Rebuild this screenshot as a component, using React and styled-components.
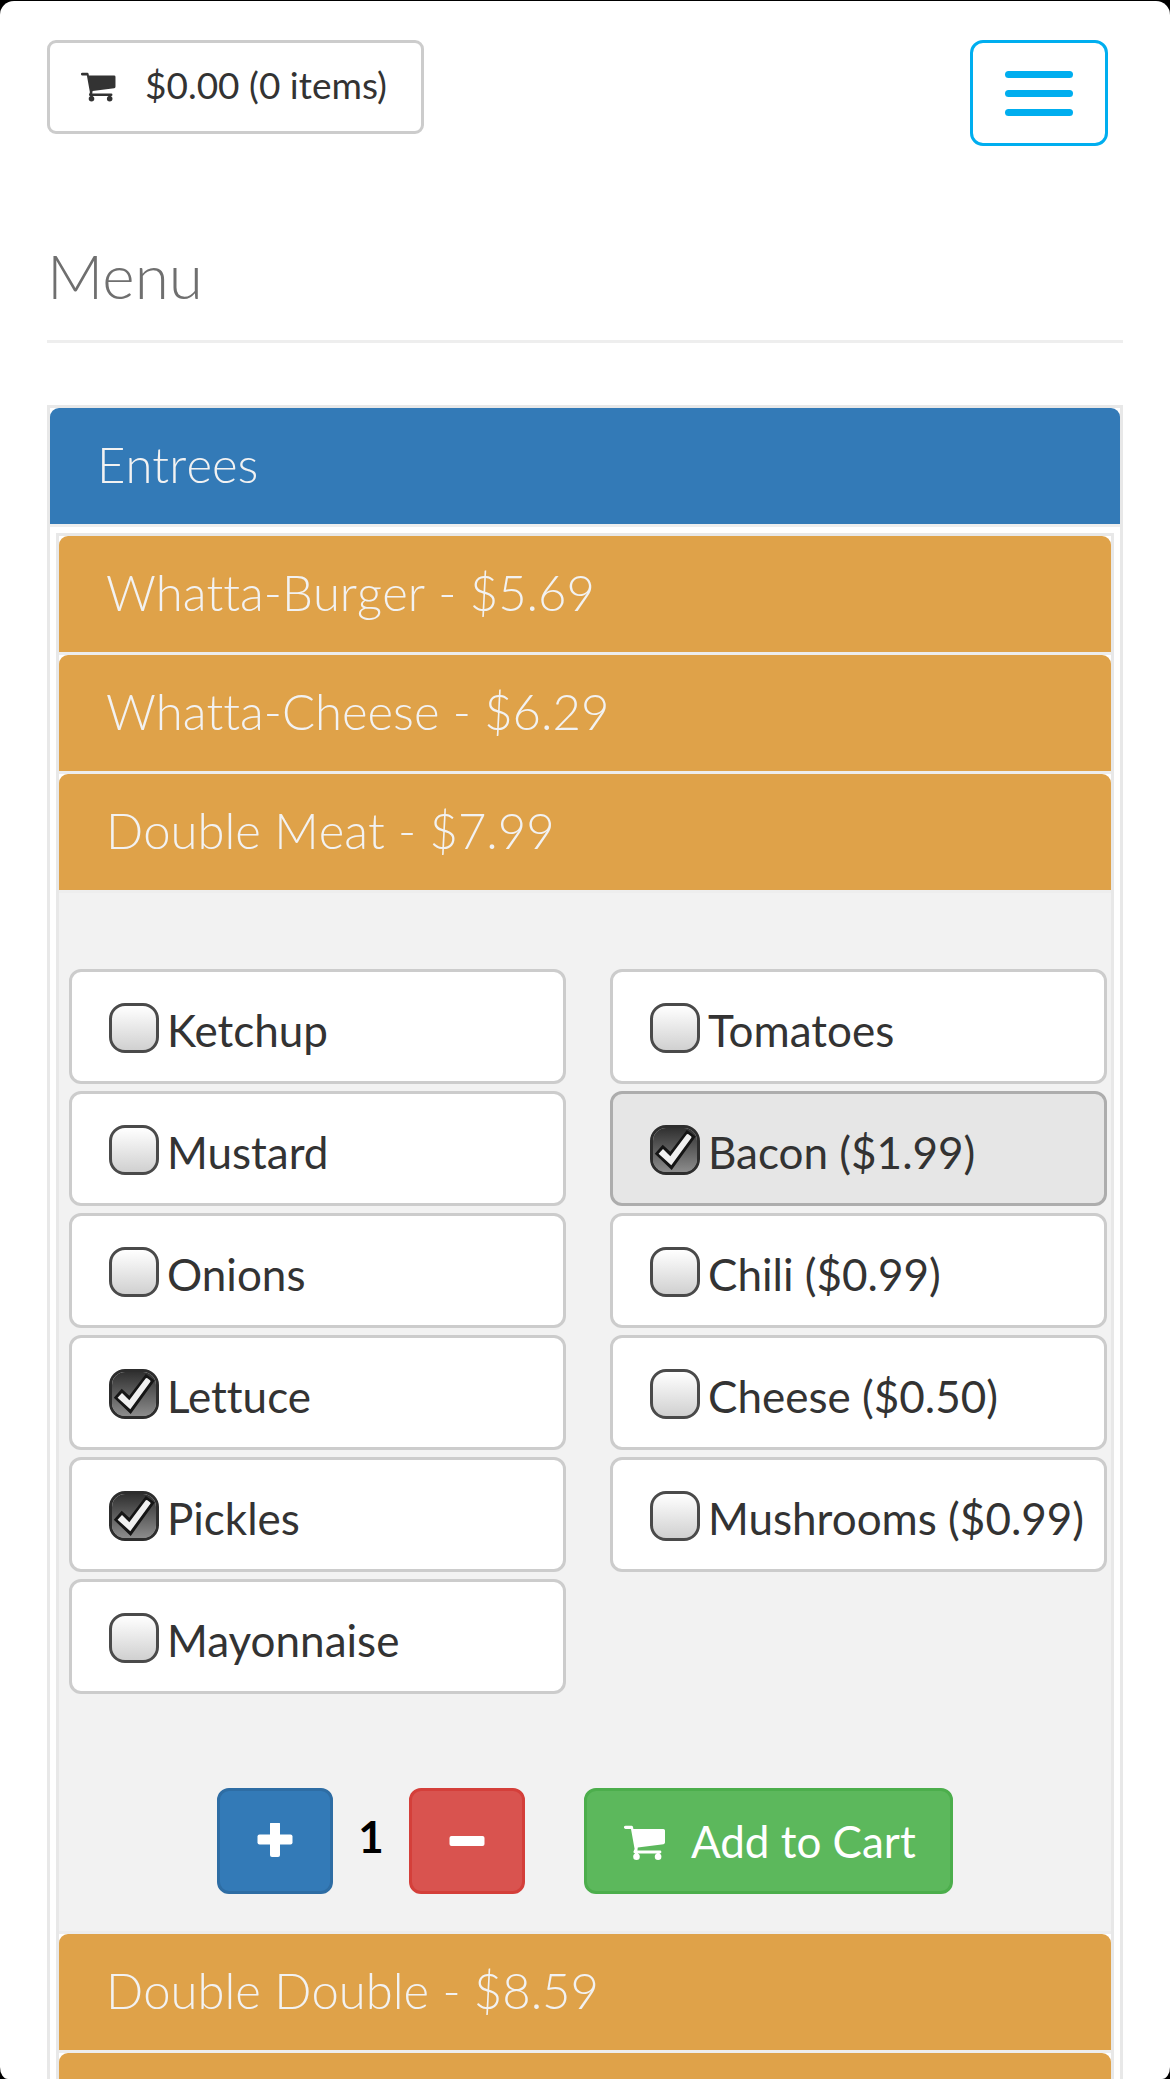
import React, { useState } from "react";
import styled, { createGlobalStyle } from "styled-components";

const GlobalStyle = createGlobalStyle`
  *, *::before, *::after { box-sizing: border-box; }
  html, body { margin: 0; background: #000; }
  body {
    font-family: Lato, "Open Sans", sans-serif;
    font-variant-ligatures: none;
    color: #333;
  }
  button { font-family: inherit; font-variant-ligatures: inherit; cursor: pointer; margin: 0; }
`;

const Screen = styled.div`
  height: calc(100vh - 1px);
  margin-top: 1px;
  padding: 39px 47px 0;
  background: #fff;
  border-radius: 14px 14px 8px 8px / 14px 14px 12px 12px;
  overflow-y: auto;
  scrollbar-width: none;
`;

const Header = styled.header`
  display: flex;
  justify-content: space-between;
  align-items: flex-start;
  padding-right: 15px;
`;

const CartButton = styled.button`
  display: flex;
  align-items: center;
  gap: 27px;
  padding: 20px 34px 24px 31px;
  border: 3px solid #ccc;
  border-radius: 9px;
  background: #fff;
  color: #333;
  font-size: 37px;
  line-height: 44px;
`;

const MenuToggle = styled.button`
  display: grid;
  gap: 12px;
  align-content: center;
  justify-content: center;
  width: 138px;
  height: 106px;
  padding: 0;
  border: 3px solid #00aeef;
  border-radius: 13px;
  background: #fff;
`;

const ToggleBar = styled.span`
  width: 68px;
  height: 7px;
  border-radius: 4px;
  background: #00aeef;
`;

const PageTitle = styled.h1`
  margin: 95px 0 62px;
  padding-bottom: 31px;
  border-bottom: 3px solid #eee;
  color: #6f6f6f;
  font-size: 62px;
  font-weight: 300;
  line-height: 68px;
`;

const Panel = styled.section`
  border: 3px solid #e8e8e8;
  background: #fff;
`;

const PanelTitle = styled.h2`
  margin: 0;
  border-bottom: ${(p) => (p.$ruled ? "3px solid #eee" : "0")};
`;

const PanelToggle = styled.button`
  display: block;
  width: 100%;
  min-height: 116px;
  padding: 26px 47px 30px;
  border: 0;
  border-radius: 9px 9px 0 0;
  background: ${(p) => (p.$tone === "primary" ? "#337ab7" : "#dfa249")};
  color: #f2f2f2;
  font-size: 49px;
  font-weight: 300;
  font-kerning: none;
  line-height: 60px;
  text-align: left;
`;

const PanelContent = styled.div`
  padding: 6px;
`;

const ItemList = styled.div`
  border: 3px solid #e8e8e8;
`;

const Item = styled.article`
  border-bottom: 3px solid #ededed;
`;

const ItemBody = styled.div`
  padding: 76px 4px 37px 10px;
  border-top: 3px solid #eee;
  background: #f2f2f2;
`;

const Toppings = styled.div`
  display: grid;
  grid-template-columns: 1fr 1fr;
  gap: 44px;
`;

const ToppingColumn = styled.div`
  display: flex;
  flex-direction: column;
  gap: 7px;
`;

const ToppingLabel = styled.label`
  display: flex;
  align-items: flex-start;
  gap: 8px;
  padding: 28px 0 21px 37px;
  border: 3px solid ${(p) => (p.$active ? "#adadad" : "#ccc")};
  border-radius: 12px;
  background: ${(p) => (p.$active ? "#e6e6e6" : "#fff")};
  font-size: 44px;
  line-height: 60px;
  white-space: nowrap;
  cursor: pointer;
`;

const Box = styled.span`
  display: grid;
  flex: none;
  margin-top: 3px;

  > * {
    grid-area: 1 / 1;
  }
`;

const BoxInput = styled.input`
  appearance: none;
  width: 50px;
  height: 50px;
  margin: 0;
  border: 3px solid #4a4a4a;
  border-radius: 16px;
  background: linear-gradient(#fff, #d0d0d0) padding-box;

  &:checked {
    border-color: #2d2d2d;
    background: linear-gradient(#303030, #8c8c8c) padding-box;
  }
`;

const BoxTick = styled.svg`
  width: 50px;
  height: 50px;
  pointer-events: none;
`;

const Actions = styled.div`
  display: flex;
  justify-content: center;
  align-items: flex-start;
  margin: 94px 6px 0 0;
`;

const tones = {
  primary: ["#337ab7", "#2e6da4"],
  danger: ["#d9534f", "#d43f3a"],
  success: ["#5cb85c", "#4cae4c"],
};

const ActionButton = styled.button`
  display: flex;
  align-items: center;
  justify-content: center;
  gap: 23px;
  height: 106px;
  padding: 0 ${(p) => (p.$tone === "success" ? 34 : 37)}px 0 37px;
  border: 3px solid ${(p) => tones[p.$tone][1]};
  border-radius: 12px;
  background: ${(p) => tones[p.$tone][0]};
  color: #fff;
  font-size: 44px;
  line-height: 60px;
`;

const Stepper = styled.div`
  display: flex;
  align-items: flex-start;
  gap: 25px;
  margin-right: 59px;
`;

const Quantity = styled.output`
  color: #000;
  font-size: 44px;
  font-weight: 700;
  line-height: 96px;
`;

const StepIcon = styled.svg`
  width: 36px;
  height: 36px;
`;

function CartIcon({ size }) {
  return (
    <svg width={size} height={size} viewBox="0 0 44 44" fill="currentColor" aria-hidden="true">
      <path d="M1.6 6.7H7.6Q8.7 6.7 9 8L9.4 10H39.4Q41 10 41 11.6V23.6Q41 25 39.5 25.2L13.8 28.4L13.4 31.6H36a1.4 1.4 0 0 1 0 2.8H11Q9.3 34.4 9.5 32.6L10.6 30L7 10H1.6a1.65 1.65 0 0 1 0-3.3Z" />
      <path d="M11 33.5h3v3h-3zM32.6 33.5h3v3h-3z" />
      <circle cx="12.5" cy="37.7" r="3.3" />
      <circle cx="34.1" cy="37.7" r="3.3" />
    </svg>
  );
}

const leftToppings = ["Ketchup", "Mustard", "Onions", "Lettuce", "Pickles", "Mayonnaise"];
const rightToppings = [
  "Tomatoes",
  "Bacon ($1.99)",
  "Chili ($0.99)",
  "Cheese ($0.50)",
  "Mushrooms ($0.99)",
];

function Topping({ name, checked, active, onToggle }) {
  const id = "topping-" + name.split(" ")[0].toLowerCase();
  return (
    <ToppingLabel htmlFor={id} $active={active}>
      <Box>
        <BoxInput id={id} type="checkbox" checked={checked} onChange={() => onToggle(name)} />
        {checked && (
          <BoxTick viewBox="0 0 50 50" aria-hidden="true">
            <path d="M4.8 28.7L12.7 19.7L20.3 26.7L36.8 5L45.8 11.4L21.7 45Z" fill="#151515" />
            <path
              d="M8.6 28.7L13 24L20.3 31.2L36.6 9.6Q37.4 8.7 38.4 9.3L41 11.2Q42 12 41.2 13L21.3 40.2Z"
              fill="#f0f0f0"
            />
          </BoxTick>
        )}
      </Box>
      {name}
    </ToppingLabel>
  );
}

function MenuItem({ title, label, children }) {
  return (
    <Item>
      <PanelTitle as="h3">
        <PanelToggle type="button" aria-label={label} aria-expanded={Boolean(children)}>
          {title}
        </PanelToggle>
      </PanelTitle>
      {children && <ItemBody>{children}</ItemBody>}
    </Item>
  );
}

export default function App() {
  const [selected, setSelected] = useState(["Lettuce", "Pickles", "Bacon ($1.99)"]);
  const [lastTouched, setLastTouched] = useState("Bacon ($1.99)");
  const [quantity, setQuantity] = useState(1);

  const toggle = (name) => {
    setLastTouched(name);
    setSelected((list) =>
      list.includes(name) ? list.filter((n) => n !== name) : [...list, name]
    );
  };

  const renderColumn = (names) => (
    <ToppingColumn>
      {names.map((name) => (
        <Topping
          key={name}
          name={name}
          checked={selected.includes(name)}
          active={lastTouched === name}
          onToggle={toggle}
        />
      ))}
    </ToppingColumn>
  );

  return (
    <>
      <GlobalStyle />
      <Screen>
        <Header>
          <CartButton type="button">
            <CartIcon size={37} />
            $0.00 (0 items)
          </CartButton>
          <MenuToggle type="button" aria-label="Toggle navigation">
            <ToggleBar />
            <ToggleBar />
            <ToggleBar />
          </MenuToggle>
        </Header>
        <main>
          <PageTitle>Menu</PageTitle>
          <Panel>
            <PanelTitle $ruled>
              <PanelToggle type="button" $tone="primary" aria-expanded="true">
                Entrees
              </PanelToggle>
            </PanelTitle>
            <PanelContent>
              <ItemList>
                <MenuItem title="Whatta-Burger - $5.69" />
                <MenuItem title="Whatta-Cheese - $6.29" />
                <MenuItem title="Double Meat - $7.99">
                  <Toppings>
                    {renderColumn(leftToppings)}
                    {renderColumn(rightToppings)}
                  </Toppings>
                  <Actions>
                    <Stepper>
                      <ActionButton
                        type="button"
                        $tone="primary"
                        aria-label="Increase quantity"
                        onClick={() => setQuantity((q) => q + 1)}
                      >
                        <StepIcon viewBox="0 0 36 36" fill="#fff" aria-hidden="true">
                          <rect x="0.5" y="11.5" width="35" height="10" rx="2" />
                          <rect x="13" y="-1" width="10" height="35" rx="2" />
                        </StepIcon>
                      </ActionButton>
                      <Quantity>{quantity}</Quantity>
                      <ActionButton
                        type="button"
                        $tone="danger"
                        aria-label="Decrease quantity"
                        onClick={() => setQuantity((q) => Math.max(1, q - 1))}
                      >
                        <StepIcon viewBox="0 0 36 36" fill="#fff" aria-hidden="true">
                          <rect x="0.5" y="13" width="35" height="10" rx="2" />
                        </StepIcon>
                      </ActionButton>
                    </Stepper>
                    <ActionButton type="button" $tone="success">
                      <CartIcon size={44} />
                      Add to Cart
                    </ActionButton>
                  </Actions>
                </MenuItem>
                <MenuItem title="Double Double - $8.59" />
                <MenuItem label="Next entree" />
              </ItemList>
            </PanelContent>
          </Panel>
        </main>
      </Screen>
    </>
  );
}
